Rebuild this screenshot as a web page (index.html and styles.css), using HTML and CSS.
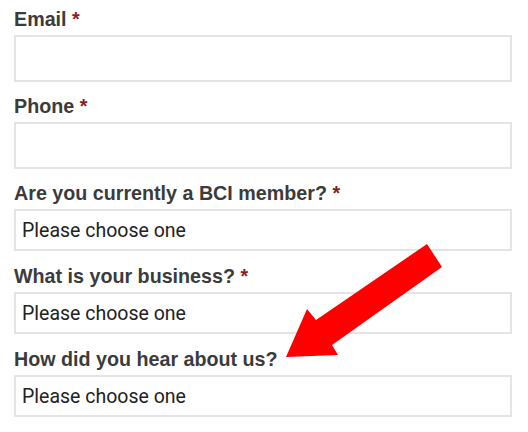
FILE: index.html
```html
<!DOCTYPE html>
<html lang="en">
<head>
  <meta charset="UTF-8">
  <title>Contact form</title>
  <link rel="stylesheet" href="styles.css">
</head>
<body>

  <form class="form">
    <div class="field">
      <label class="label">Email <span class="req">*</span></label>
      <input type="text" class="input">
    </div>
    <div class="field">
      <label class="label">Phone <span class="req">*</span></label>
      <input type="text" class="input">
    </div>
    <div class="field field-select">
      <label class="label">Are you currently a BCI member? <span class="req">*</span></label>
      <div class="select">Please choose one</div>
    </div>
    <div class="field field-select">
      <label class="label">What is your business? <span class="req">*</span></label>
      <div class="select">Please choose one</div>
    </div>
    <div class="field field-select">
      <label class="label">How did you hear about us?</label>
      <div class="select">Please choose one</div>
    </div>
  </form>

  <!-- annotation arrow pointing at the last question -->
  <svg class="arrow" width="528" height="432" viewBox="0 0 528 432">
    <polygon fill="#ff0000" points="286,357 307,309 316,320 427,244 442,267 332,345 338,355"/>
  </svg>

</body>
</html>
```

FILE: styles.css
```css
body {
  margin: 0;
  padding: 8px 16px 0 14px;
  background: #fff;
  font-family: "Liberation Sans", Arial, sans-serif;
}
.form {
  display: flex;
  flex-direction: column;
}
.field {
  display: flex;
  flex-direction: column;
  margin-bottom: 13px;
}
.field-select {
  margin-bottom: 14px;
}
.label {
  display: block;
  height: 22px;
  font-size: 19.7px;
  line-height: 22px;
  font-weight: bold;
  color: #3b3b3b;
  margin-bottom: 5px;
}
.req {
  color: #8b1a1a;
}
.input {
  height: 47px;
  box-sizing: border-box;
  border: 2px solid #e4e4e4;
  border-radius: 0;
  margin: 0;
  padding: 0 8px;
  background: #fff;
}
.select {
  height: 42px;
  box-sizing: border-box;
  border: 2px solid #e4e4e4;
  padding: 0 6px;
  display: flex;
  align-items: center;
  font-family: Roboto, "Liberation Sans", sans-serif;
  font-size: 19.5px;
  color: #222;
}
.arrow {
  position: absolute;
  left: 0;
  top: 0;
  pointer-events: none;
}
```
